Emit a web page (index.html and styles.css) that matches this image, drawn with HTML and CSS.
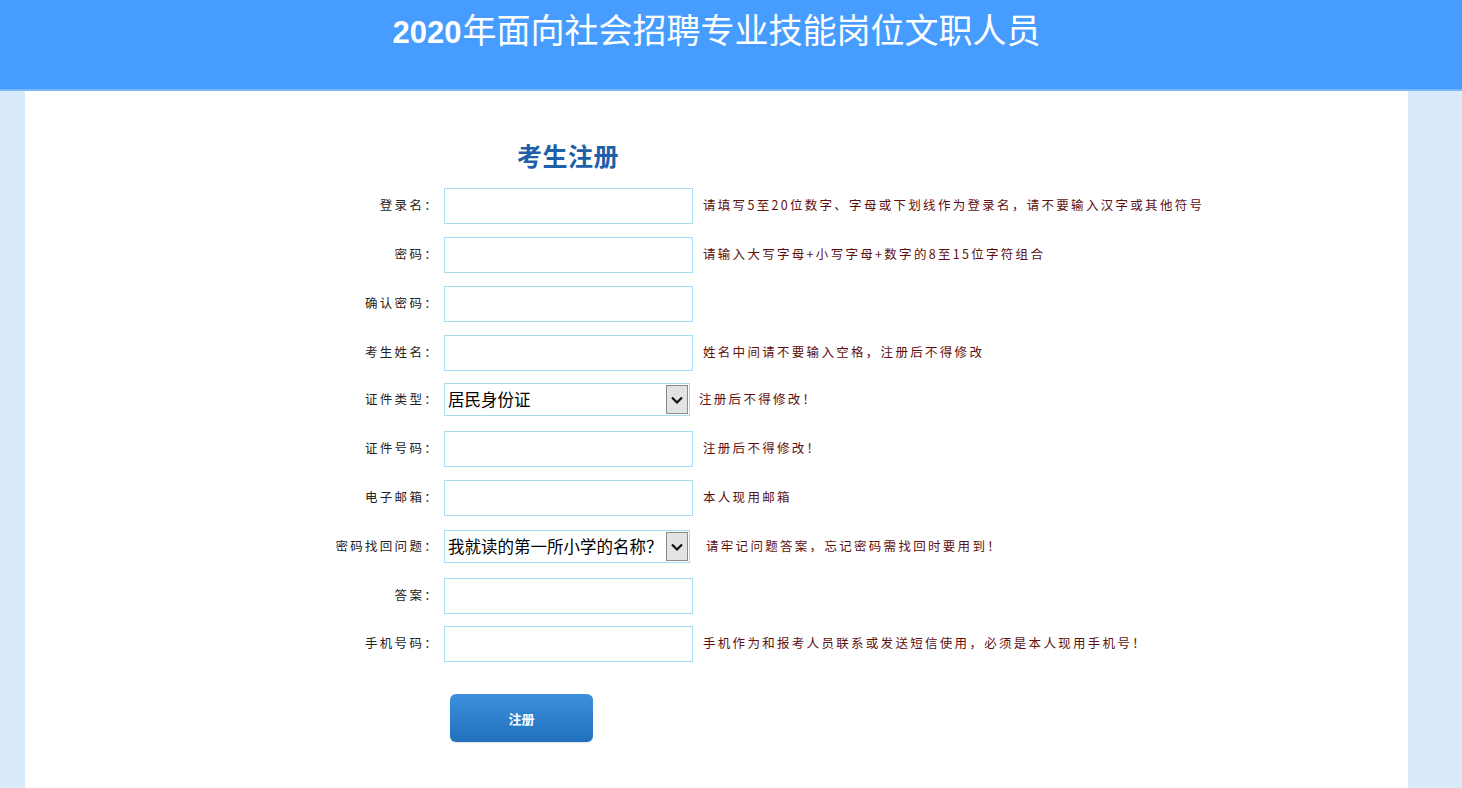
FILE: index.html
```html
<!DOCTYPE html>
<html lang="zh-CN">
<head>
<meta charset="utf-8">
<title>考生注册</title>
<link rel="stylesheet" href="styles.css">
</head>
<body>
<header class="top">
  <div class="top-side-l"></div>
  <h1 class="top-title"><span class="yr">2020</span>年面向社会招聘专业技能岗位文职人员</h1>
  <div class="top-side-r"></div>
</header>
<div class="page">
  <div class="side-l"></div>
  <main class="content">
    <h2 class="reg-title">考生注册</h2>
    <form class="reg-form">
      <div class="row">
        <label class="lbl">登录名：</label>
        <input class="inp" type="text">
        <span class="hint">请填写5至20位数字、字母或下划线作为登录名，请不要输入汉字或其他符号</span>
      </div>
      <div class="row">
        <label class="lbl">密码：</label>
        <input class="inp" type="password">
        <span class="hint">请输入大写字母+小写字母+数字的8至15位字符组合</span>
      </div>
      <div class="row">
        <label class="lbl">确认密码：</label>
        <input class="inp" type="password">
      </div>
      <div class="row">
        <label class="lbl">考生姓名：</label>
        <input class="inp" type="text">
        <span class="hint">姓名中间请不要输入空格，注册后不得修改</span>
      </div>
      <div class="row row-sel row-sel1">
        <label class="lbl">证件类型：</label>
        <div class="sel">
          <span class="sel-text">居民身份证</span>
          <span class="sel-btn"><svg width="14" height="10" viewBox="0 0 14 10"><path d="M2 2.5 L7 7.5 L12 2.5" fill="none" stroke="#111" stroke-width="2.2"/></svg></span>
        </div>
        <span class="hint hint-s1">注册后不得修改！</span>
      </div>
      <div class="row">
        <label class="lbl">证件号码：</label>
        <input class="inp" type="text">
        <span class="hint">注册后不得修改！</span>
      </div>
      <div class="row row-b14">
        <label class="lbl">电子邮箱：</label>
        <input class="inp" type="text">
        <span class="hint">本人现用邮箱</span>
      </div>
      <div class="row row-sel">
        <label class="lbl">密码找回问题：</label>
        <div class="sel">
          <span class="sel-text">我就读的第一所小学的名称？</span>
          <span class="sel-btn"><svg width="14" height="10" viewBox="0 0 14 10"><path d="M2 2.5 L7 7.5 L12 2.5" fill="none" stroke="#111" stroke-width="2.2"/></svg></span>
        </div>
        <span class="hint hint-s2">请牢记问题答案，忘记密码需找回时要用到！</span>
      </div>
      <div class="row row-b12">
        <label class="lbl">答案：</label>
        <input class="inp" type="text">
      </div>
      <div class="row">
        <label class="lbl">手机号码：</label>
        <input class="inp" type="text">
        <span class="hint">手机作为和报考人员联系或发送短信使用，必须是本人现用手机号！</span>
      </div>
      <div class="btn-row">
        <button class="btn" type="button">注册</button>
      </div>
    </form>
  </main>
  <div class="side-r"></div>
</div>
</body>
</html>
```
FILE: styles.css
```css
html, body {
  margin: 0;
  padding: 0;
  height: 100%;
  overflow: hidden;
}
body {
  font-family: "Noto Sans CJK SC", "Noto Sans", sans-serif;
  background: #d9ebfa;
}
.top {
  display: flex;
  height: 89px;
  background: #469dff;
  border-bottom: 2px solid #7ab8fb;
}
.top-side-l { width: 25px; flex: none; }
.top-side-r { width: 54px; flex: none; }
.top-title {
  flex: 1;
  margin: 0;
  padding-top: 8px;
  text-align: center;
  color: #fff;
  font-size: 34px;
  font-weight: 400;
  line-height: 42px;
}
.top-title .yr {
  font-family: "Liberation Sans", Arial, sans-serif;
  font-weight: 700;
  font-size: 31px;
  margin-right: 1px;
}
.page {
  display: flex;
  height: calc(100% - 91px);
}
.side-l { width: 25px; flex: none; background: #d9ebfa; }
.side-r { width: 54px; flex: none; background: #d9ebfa; }
.content {
  flex: 1;
  background: #fff;
}
.reg-title {
  margin: 49px 0 0 492px;
  font-size: 25px;
  line-height: 30px;
  font-weight: 700;
  color: #1d5fa8;
  letter-spacing: 0.5px;
}
.reg-form {
  margin: 18px 0 0 264px;
}
.row {
  display: flex;
  align-items: center;
  height: 36px;
  margin-bottom: 13px;
}
.row-b14 { margin-bottom: 14px; }
.row-b12 { margin-bottom: 12px; }
.row-sel {
  height: 33px;
  margin-bottom: 15px;
}
.row-sel1 { margin-top: -1px; }
.lbl {
  width: 150px;
  flex: none;
  text-align: right;
  font-size: 12.5px;
  letter-spacing: 2.3px;
  color: #222;
  margin-right: 5px;
  padding-bottom: 3px;
}
.inp {
  box-sizing: border-box;
  width: 249px;
  height: 36px;
  margin: 0;
  padding: 0 4px;
  border: 1px solid #a9dcf0;
  outline: none;
  background: #fff;
  flex: none;
}
.hint {
  margin-left: 10px;
  font-size: 12.5px;
  letter-spacing: 2.3px;
  color: #5e1010;
  white-space: nowrap;
  padding-bottom: 3px;
}
.hint-s1 { margin-left: 9px; }
.hint-s2 { margin-left: 16px; }
.sel {
  position: relative;
  box-sizing: border-box;
  width: 246px;
  height: 33px;
  border: 1px solid #a9dcf0;
  background: #fff;
  flex: none;
  display: flex;
  align-items: center;
}
.sel-text {
  padding-left: 3px;
  padding-bottom: 1px;
  font-size: 16.5px;
  color: #000;
  white-space: nowrap;
}
.sel-btn {
  position: absolute;
  right: 1px;
  top: 1px;
  bottom: 1px;
  width: 22px;
  box-sizing: border-box;
  border: 1px solid #8a8a8a;
  background: #e3e3e3;
  display: flex;
  align-items: center;
  justify-content: center;
}
.btn-row {
  padding-left: 161px;
  padding-top: 19px;
}
.btn {
  width: 143px;
  height: 48px;
  border: none;
  border-radius: 6px;
  background: linear-gradient(#3c90dc, #2170be);
  color: #fff;
  font-family: "Noto Sans CJK SC", sans-serif;
  font-size: 13px;
  font-weight: 700;
  box-shadow: 0 1px 1px rgba(0,0,0,0.12);
}
```
